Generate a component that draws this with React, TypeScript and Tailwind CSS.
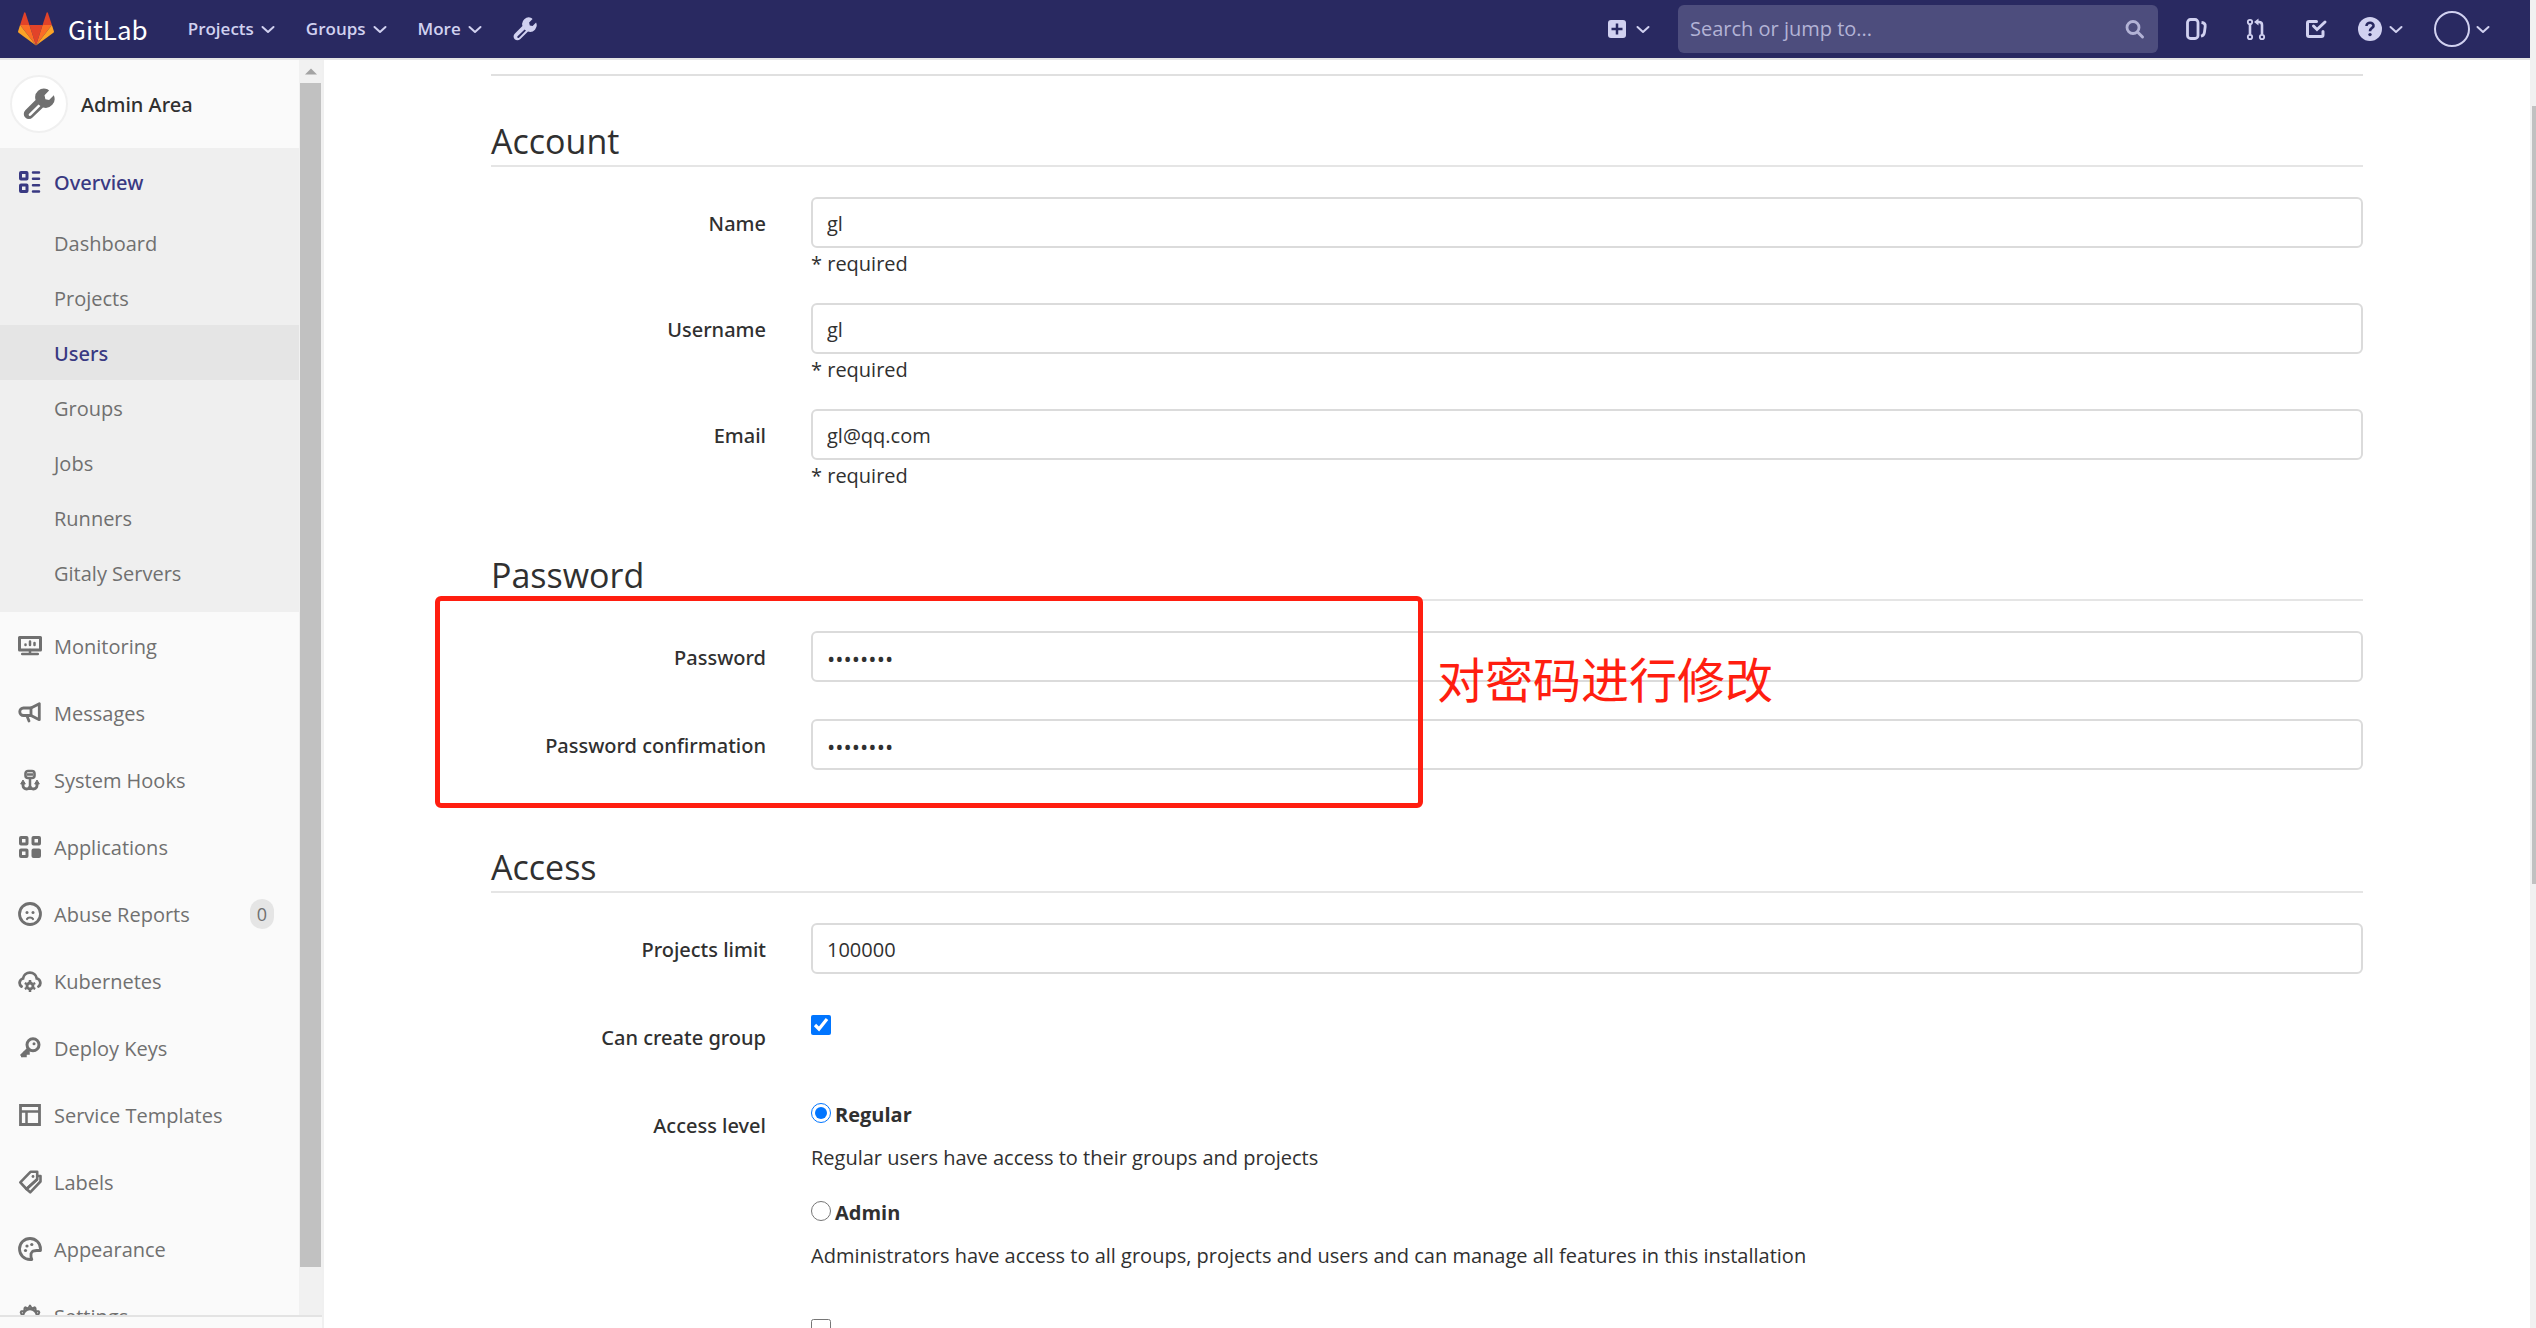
import type { ReactNode } from "react";

type IconProps = { children: ReactNode; className?: string };

function Icon({ children, className = "size-6" }: IconProps) {
  return (
    <svg
      viewBox="0 0 24 24"
      className={`${className} shrink-0`}
      fill="none"
      stroke="currentColor"
      strokeWidth="3"
      aria-hidden="true"
    >
      {children}
    </svg>
  );
}

function Chevron() {
  return (
    <svg viewBox="0 0 16 16" className="size-4 shrink-0" fill="none" stroke="currentColor" strokeWidth="2" aria-hidden="true">
      <path d="M2.500 6l5.500 5 5.500-5" strokeLinecap="round" strokeLinejoin="round" />
    </svg>
  );
}

function Wrench({ className }: { className: string }) {
  return (
    <svg viewBox="0 0 32 32" className={`${className} shrink-0`} aria-hidden="true">
      <path
        fill="currentColor"
        fillRule="evenodd"
        d="M24.5 1.2a8.9 8.9 0 0 0-11.9 10.9L2.3 22.300a5 5 0 0 0 0 7.200 5 5 0 0 0 7.200 0L20 19.400A8.900 8.900 0 0 0 30.800 7.300l-4.700 4.700-3.700-.8-.9-4 4.600-4.600zM6.100 25.800L15.500 16.500c.8.7 1.200 1.100 1.900 1.600L8 27.600a1.300 1.300 0 0 1-1.900-1.800z"
      />
    </svg>
  );
}

function Logo() {
  return (
    <svg viewBox="0 0 36 34" className="h-[34px] w-9 shrink-0" aria-hidden="true">
      <path fill="#e24329" d="M18 33.500L24.600 13H11.400z" />
      <path fill="#fc6d26" d="M18 33.500L11.400 13H2.100z" />
      <path fill="#fca326" d="M2.100 13L.1 19.200a1.400 1.400 0 0 0 .5 1.500L18 33.500z" />
      <path fill="#e24329" d="M2.100 13h9.300L7.400.7a.7.7 0 0 0-1.300 0z" />
      <path fill="#fc6d26" d="M18 33.500L24.600 13h9.300z" />
      <path fill="#fca326" d="M33.900 13l2 6.200a1.400 1.400 0 0 1-.5 1.500L18 33.500z" />
      <path fill="#e24329" d="M33.900 13h-9.300L28.600.7a.7.7 0 0 1 1.300 0z" />
    </svg>
  );
}

const overviewLinks = ["Dashboard", "Projects", "Users", "Groups", "Jobs", "Runners", "Gitaly Servers"];

const gear =
  "M12 1.500l1.800 3 2.800-1.200.9.9.2 2.800 3 .2.600 1.200-1.200 2.700 2.400 1.900-2.400 1.900 1.200 2.700-.6 1.200-3 .2-.2 2.800-.9.9-2.800-1.200-1.800 3-1.800-3-2.800 1.200-.9-.9-.2-2.800-3-.2-.6-1.200 1.200-2.700-2.400-1.900 2.400-1.900-1.200-2.700.6-1.200 3-.2.2-2.800.9-.9 2.800 1.200z";

const sections: { label: string; count?: number; icon: ReactNode }[] = [
  {
    label: "Monitoring",
    icon: (
      <>
        <path d="M1.500 3.500h21v12.500h-21z" strokeLinejoin="round" />
        <path d="M12 16v4M4.200 20h15.600" strokeWidth="2.500" strokeLinecap="round" />
        <path d="M7.500 10.500v.5M12 7.500v3.500M16.500 9v2" strokeWidth="2.500" strokeLinecap="round" />
      </>
    ),
  },
  {
    label: "Messages",
    icon: (
      <>
        <path d="M13 7H5.500a3 3 0 0 0 0 7.500H13z" strokeWidth="2.800" />
        <path d="M13 7l8.300-4.300v16L13 14.500M9 15l2 5" strokeWidth="2.800" strokeLinejoin="round" strokeLinecap="round" />
      </>
    ),
  },
  {
    label: "System Hooks",
    icon: (
      <>
        <rect x="7.500" y="3" width="9" height="7" rx="2.500" strokeWidth="2.600" />
        <path d="M9 6.500h6M12 10v12" strokeWidth="2.500" />
        <path d="M5 14v3.500c0 2 1.500 3.500 3.500 3.500s3.500-1 3.500-3M19 14v3.500c0 2-1.500 3.500-3.500 3.500s-3.500-1-3.500-3" strokeWidth="2.800" />
        <path d="M5 12l-2.300 4h4.600zM19 12l-2.300 4h4.600z" fill="currentColor" strokeWidth="1" />
      </>
    ),
  },
  {
    label: "Applications",
    icon: (
      <>
        <rect x="2.500" y="2.500" width="6.500" height="6.500" rx="0.500" />
        <rect x="15" y="2.500" width="6.500" height="6.500" rx="0.500" />
        <rect x="2.500" y="15" width="6.500" height="6.500" rx="0.500" />
        <rect x="15" y="15" width="6.500" height="6.500" rx="0.500" fill="currentColor" />
      </>
    ),
  },
  {
    label: "Abuse Reports",
    count: 0,
    icon: (
      <>
        <circle cx="12" cy="12" r="10.500" strokeWidth="2.800" />
        <path d="M9 17c1-2 5-2 6 0" strokeWidth="2.200" strokeLinecap="round" />
        <circle cx="9" cy="10.500" r="1.500" fill="currentColor" stroke="none" />
        <circle cx="15" cy="10.500" r="1.500" fill="currentColor" stroke="none" />
      </>
    ),
  },
  {
    label: "Kubernetes",
    icon: (
      <>
        <path d="M3.500 17.500A4.500 4.500 0 0 1 5 9.500a7 7 0 0 1 13.800 0 4.500 4.500 0 0 1 1.700 8" strokeWidth="2.800" strokeLinecap="round" />
        <circle cx="12" cy="17" r="3" strokeWidth="2.800" />
        <path d="M12 11v2M12 21v2M6.800 14l1.800 1M15.400 19l1.800 1M17.200 14l-1.800 1M8.600 19l-1.800 1" strokeWidth="2.500" />
      </>
    ),
  },
  {
    label: "Deploy Keys",
    icon: (
      <>
        <circle cx="15" cy="8.700" r="6" />
        <circle cx="16" cy="7.800" r="1.500" fill="currentColor" stroke="none" />
        <path d="M10.500 13L3.200 20.300M3 19.500h4v-2.500h3v-3" strokeWidth="3.500" />
      </>
    ),
  },
  {
    label: "Service Templates",
    icon: (
      <>
        <path d="M2.500 2.500h19v19h-19z" strokeWidth="2.800" />
        <path d="M2.500 8.500h19M8.500 8.500v13" strokeWidth="2.500" />
      </>
    ),
  },
  {
    label: "Labels",
    icon: (
      <>
        <path d="M12.500 1.800h6.700v7.500L8.500 19 2.300 12.300z" strokeWidth="2.600" strokeLinejoin="round" />
        <path d="M19.500 6h3v5.500L12.200 22.300 8.500 19l11-10" strokeWidth="2.600" strokeLinejoin="round" />
        <circle cx="15" cy="6.500" r="1.400" fill="currentColor" stroke="none" />
      </>
    ),
  },
  {
    label: "Appearance",
    icon: (
      <>
        <path d="M22.500 12A10.500 10.500 0 1 0 12 22.500h1.800l-.8-2.500v-3.500l1.800-2.300L18.500 13.500h4z" strokeWidth="2.800" strokeLinejoin="round" />
        <circle cx="7.500" cy="13.500" r="1.600" fill="currentColor" stroke="none" />
        <circle cx="9" cy="9" r="1.600" fill="currentColor" stroke="none" />
        <circle cx="13.800" cy="7.500" r="1.600" fill="currentColor" stroke="none" />
      </>
    ),
  },
  {
    label: "Settings",
    icon: (
      <>
        <path d={gear} strokeWidth="2" strokeLinejoin="round" />
        <circle cx="12" cy="12" r="7" strokeWidth="2.500" />
      </>
    ),
  },
];

function Navbar() {
  return (
    <header className="flex h-[60px] shrink-0 items-center border-b-2 border-[#e5e5e5] bg-[#292961] pr-[39px] pl-[18px] text-[#d1d1f0]">
      <a href="#" className="flex items-center gap-3.5 text-white">
        <Logo />
        <span className="font-['Noto_Sans_CJK_SC',sans-serif] text-[26px] leading-9">GitLab</span>
      </a>
      <nav className="ml-10 flex items-center gap-[30px] text-[17px] font-semibold">
        <button className="flex items-center gap-1.5">Projects <Chevron /></button>
        <button className="flex items-center gap-1.5">Groups <Chevron /></button>
        <button className="flex items-center gap-1.5">More <Chevron /></button>
        <a href="#" aria-label="Admin Area"><Wrench className="size-6" /></a>
      </nav>
      <div className="ml-auto flex items-center">
        <button aria-label="New" className="flex items-center gap-1.5">
          <Icon>
            <rect x="3" y="3" width="18" height="18" rx="3" fill="currentColor" stroke="none" />
            <path d="M12 6.500v11M6.500 12h11" stroke="#292961" strokeWidth="2.500" />
          </Icon>
          <Chevron />
        </button>
        <form className="ml-[27px] flex h-12 w-[480px] items-center rounded-md bg-[#4d4d7d] px-3">
          <input
            aria-label="Search or jump to"
            placeholder="Search or jump to..."
            className="min-w-0 flex-1 bg-transparent text-xl outline-none placeholder:text-[#b3b3d6]"
          />
          <Icon>
            <circle cx="11" cy="10.500" r="6" strokeWidth="2.800" className="text-[#b3b3d6]" />
            <path d="M15.500 15l5 5" strokeLinecap="round" className="text-[#b3b3d6]" />
          </Icon>
        </form>
        <nav className="ml-[26px] flex items-center gap-9">
          <a href="#" aria-label="Issues">
            <Icon>
              <rect x="3.500" y="2.500" width="10.500" height="19" rx="3" strokeWidth="2.800" />
              <path d="M17.500 5.500c2.500.3 4 1.500 3.700 4l-.8 6c-.3 2-1 3.200-3.400 3.700" strokeWidth="2.800" />
            </Icon>
          </a>
          <a href="#" aria-label="Merge requests">
            <Icon>
              <g strokeWidth="1.800">
                <circle cx="6" cy="5" r="2.200" />
                <circle cx="6" cy="20" r="2.200" />
                <circle cx="18" cy="20" r="2.200" />
              </g>
              <path d="M6 7.500v10M18 17.500V8c0-2-1-3-3-3h-2" strokeWidth="2.600" />
              <path d="M14.500 1.500v7L10 5z" fill="currentColor" stroke="none" />
            </Icon>
          </a>
          <a href="#" aria-label="To-Do List">
            <Icon>
              <path d="M12.500 4.500H5a1.500 1.500 0 0 0-1.500 1.500v12A1.500 1.500 0 0 0 5 19.500h12.500A1.500 1.500 0 0 0 19 18v-3.500" strokeLinecap="round" />
              <path d="M9.500 9l3.500 3.500L21 5" strokeLinecap="round" />
            </Icon>
          </a>
        </nav>
        <button aria-label="Help" className="ml-[30px] flex items-center gap-1.5">
          <Icon>
            <circle cx="12" cy="12" r="12" fill="currentColor" stroke="none" />
            <path d="M8.500 9c0-4.500 7.500-4 7 0-.2 2-3.500 2-3.500 5.200" stroke="#292961" strokeWidth="2.600" />
            <circle cx="12" cy="17.600" r="1.700" fill="#292961" stroke="none" />
          </Icon>
          <Chevron />
        </button>
        <button aria-label="User menu" className="ml-[30px] flex items-center gap-[5px]">
          <span className="size-9 rounded-full border-2 border-[#d1d1f0]" />
          <Chevron />
        </button>
      </div>
    </header>
  );
}

function Sidebar() {
  return (
    <aside className="flex w-[324px] shrink-0 flex-col border-r-2 border-[#f0f0f0] bg-[#fafafa] text-xl text-[#707070]">
      <div className="flex min-h-0 flex-1 border-b-2 border-[#e3e3e3]">
        <nav className="min-w-0 flex-1 overflow-hidden">
          <a href="#" className="flex h-[88px] items-center gap-[13px] pl-2.5 text-[#303030]">
            <span className="flex size-[58px] items-center justify-center rounded-full border-2 border-[#f0f0f0] bg-white text-[#707070]">
              <Wrench className="size-8" />
            </span>
            <span className="pt-0.5 font-['Noto_Sans',sans-serif] font-medium">Admin Area</span>
          </a>
          <div className="bg-[#efefef] pb-3">
            <a
              href="#"
              className="flex h-[67px] items-center gap-3 pl-[18px] font-['Noto_Sans',sans-serif] font-medium text-[#393982]"
            >
              <Icon>
                <rect x="2.500" y="2.500" width="6.500" height="6.500" rx="0.500" />
                <rect x="2.500" y="15" width="6.500" height="6.500" rx="0.500" />
                <path d="M15 2.500h6M15 8.800h6M15 15.200h6M15 21.500h6" strokeWidth="2.500" strokeLinecap="round" />
              </Icon>
              <span className="pt-0.5">Overview</span>
            </a>
            <ul>
              {overviewLinks.map((label) => (
                <li key={label}>
                  <a
                    href="#"
                    className={`flex h-[55px] items-center pt-0.5 pl-[54px] ${
                      label === "Users" ? "bg-[#e5e5e5] font-['Noto_Sans',sans-serif] font-medium text-[#393982]" : ""
                    }`}
                  >
                    {label}
                  </a>
                </li>
              ))}
            </ul>
          </div>
          <ul>
            {sections.map(({ label, count, icon }) => (
              <li key={label}>
                <a href="#" className="flex h-[67px] items-center gap-3 pr-[25px] pl-[18px]">
                  <Icon>{icon}</Icon>
                  <span className="pt-0.5">{label}</span>
                  {count !== undefined && (
                    <span className="ml-auto rounded-full bg-[#e5e5e5] px-[7px] text-lg leading-[30px]">{count}</span>
                  )}
                </a>
              </li>
            ))}
          </ul>
        </nav>
        <div className="flex w-[23px] shrink-0 flex-col items-center bg-[#f1f1f1] pb-12">
          <svg viewBox="0 0 12 6" className="my-2 h-[7px] w-3" aria-hidden="true">
            <path d="M0 6l6-6 6 6z" fill="#a3a3a3" />
          </svg>
          <div className="w-[21px] flex-1 bg-[#c1c1c1]" />
        </div>
      </div>
      <div className="h-[11px] shrink-0" />
    </aside>
  );
}

function Fieldset({ title, children }: { title: string; children: ReactNode }) {
  return (
    <fieldset className="mb-[34px]">
      <legend className="mb-[30px] block w-full border-b-2 border-[#e5e5e5] pt-0.5 text-[34px] leading-[48px] text-[#303030]">
        {title}
      </legend>
      <div className="relative">{children}</div>
    </fieldset>
  );
}

const labelClass = "w-[275px] shrink-0 pt-[13px] text-right font-['Noto_Sans',sans-serif] font-medium";

type FieldProps = { id: string; label: string; value: string; type?: string; required?: boolean };

function Field({ id, label, value, type = "text", required }: FieldProps) {
  return (
    <div className="flex gap-[45px] pb-[37px]">
      <label htmlFor={id} className={labelClass}>
        {label}
      </label>
      <div className="flex-1">
        <input
          id={id}
          type={type}
          defaultValue={value}
          className={`block h-[51px] w-full rounded-md border-2 border-[#dbdbdb] px-3.5 pt-0.5 ${
            type === "password" ? "text-[22px]" : "text-xl"
          }`}
        />
        {required && <span className="block h-[18px] leading-8">* required</span>}
      </div>
    </div>
  );
}

function AccessLevel({ id, title, text, checked }: { id: string; title: string; text: string; checked?: boolean }) {
  return (
    <div className="mb-[10px]">
      <div className="flex h-8 items-start gap-1">
        <input id={id} type="radio" name="access" defaultChecked={checked} className="mt-1 size-5" />
        <label htmlFor={id} className="font-bold leading-8">{title}</label>
      </div>
      <p className="mt-[11px] h-[45px] leading-8">{text}</p>
    </div>
  );
}

export default function App() {
  return (
    <div className="flex h-screen overflow-hidden bg-white font-['Open_Sans','Noto_Sans',sans-serif] text-xl text-[#303030]">
      <div className="flex min-w-0 flex-1 flex-col">
        <Navbar />
        <div className="flex min-h-0 flex-1">
          <Sidebar />
          <main className="min-w-0 flex-1 overflow-hidden px-6 pt-3.5">
            <form className="mx-auto max-w-[1872px]">
              <hr className="mb-[39px] border-t-2 border-[#e0e0e0]" />
              <Fieldset title="Account">
                <Field id="name" label="Name" value="gl" required />
                <Field id="username" label="Username" value="gl" required />
                <Field id="email" label="Email" value="gl@qq.com" required />
              </Fieldset>

              <Fieldset title="Password">
                <Field id="password" label="Password" value="12345678" type="password" />
                <Field id="confirmation" label="Password confirmation" value="12345678" type="password" />
                {/* Highlight drawn over the password rows */}
                <div className="pointer-events-none absolute -top-[35px] -left-14 h-[212px] w-[988px] rounded-md border-[5px] border-[#ff1e10]" />
                <p className="pointer-events-none absolute top-2.5 left-[946px] font-['Noto_Sans_CJK_SC',sans-serif] text-5xl leading-[72px] text-[#ff1e10]">
                  对密码进行修改
                </p>
              </Fieldset>

              <Fieldset title="Access">
                <Field id="limit" label="Projects limit" value="100000" />
                <div className="flex h-[88px] gap-[45px]">
                  <label htmlFor="can-create" className={labelClass}>
                    Can create group
                  </label>
                  <input id="can-create" type="checkbox" defaultChecked className="mt-1 size-5" />
                </div>
                <div className="flex gap-[45px]">
                  <span className={labelClass}>Access level</span>
                  <div className="flex-1">
                    <AccessLevel
                      id="regular"
                      title="Regular"
                      text="Regular users have access to their groups and projects"
                      checked
                    />
                    <AccessLevel
                      id="admin"
                      title="Admin"
                      text="Administrators have access to all groups, projects and users and can manage all features in this installation"
                    />
                  </div>
                </div>
                <div className="mt-6 pl-80">
                  <input type="checkbox" aria-label="External" className="mt-1 block size-5" />
                </div>
              </Fieldset>
            </form>
          </main>
        </div>
      </div>
      <div className="flex w-1.5 shrink-0 flex-col bg-[#f1f1f1] pt-[106px] pl-0.5">
        <div className="h-[778px] bg-[#c1c1c1]" />
      </div>
    </div>
  );
}
